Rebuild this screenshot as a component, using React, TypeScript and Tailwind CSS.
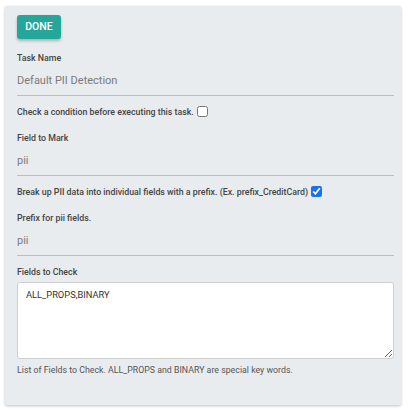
export default function App() {
  return (
    <div
      className="h-[412px] w-[411px] bg-white pt-[6px] pl-[5px]"
      style={{ fontFamily: "Roboto, 'Liberation Sans', sans-serif" }}
    >
      <div className="h-[399px] w-[396px] rounded-[2px] bg-[#e9ecef] px-[12px] pt-[7px] shadow-[0_1px_3px_rgba(0,0,0,0.25)]">
        <button className="h-[24px] w-[44px] rounded-[3px] bg-[#26a69a] text-[10.5px] font-medium text-white shadow-[0_2px_3px_rgba(0,0,0,0.25)]">
          DONE
        </button>

        <div className="mt-[13px] h-[12px] text-[8.8px] leading-[12px] font-medium text-[#444]">
          Task Name
        </div>
        <div className="flex h-[32px] w-[377px] items-end border-b border-[#bdbdbd] pb-[7px] text-[11px] leading-[14px] text-[#7a7a7a]">
          Default PII Detection
        </div>

        <label className="mt-[9px] flex h-[14px] items-center gap-[3px] text-[8.8px] leading-[12px] font-medium text-[#444]">
          Check a condition before executing this task.
          <input type="checkbox" className="m-0 h-[11px] w-[11px]" />
        </label>

        <div className="mt-[13px] h-[12px] text-[8.8px] leading-[12px] font-medium text-[#444]">
          Field to Mark
        </div>
        <div className="flex h-[32px] w-[377px] items-end border-b border-[#bdbdbd] pb-[7px] text-[11px] leading-[14px] text-[#7a7a7a]">
          pii
        </div>

        <label className="mt-[9px] flex h-[14px] items-center gap-[3px] text-[8.8px] leading-[12px] font-medium text-[#444]">
          Break up PII data into individual fields with a prefix. (Ex. prefix_CreditCard)
          <input type="checkbox" defaultChecked className="m-0 h-[11px] w-[11px] accent-[#1a73e8]" />
        </label>

        <div className="mt-[13px] h-[12px] text-[8.8px] leading-[12px] font-medium text-[#444]">
          Prefix for pii fields.
        </div>
        <div className="flex h-[32px] w-[377px] items-end border-b border-[#bdbdbd] pb-[7px] text-[11px] leading-[14px] text-[#7a7a7a]">
          pii
        </div>

        <div className="mt-[10px] h-[12px] text-[8.8px] leading-[12px] font-medium text-[#444]">
          Fields to Check
        </div>
        <textarea
          className="mt-[4px] block h-[77px] w-[377px] resize-y rounded-[3px] border border-[#d0d0d0] bg-white px-[8px] py-[6px] text-[9.3px] leading-[12px] text-[#333] outline-none"
          defaultValue="ALL_PROPS,BINARY"
        />
        <div className="mt-[5px] h-[12px] text-[8.8px] leading-[12px] text-[#555]">
          List of Fields to Check. ALL_PROPS and BINARY are special key words.
        </div>
      </div>
    </div>
  );
}
